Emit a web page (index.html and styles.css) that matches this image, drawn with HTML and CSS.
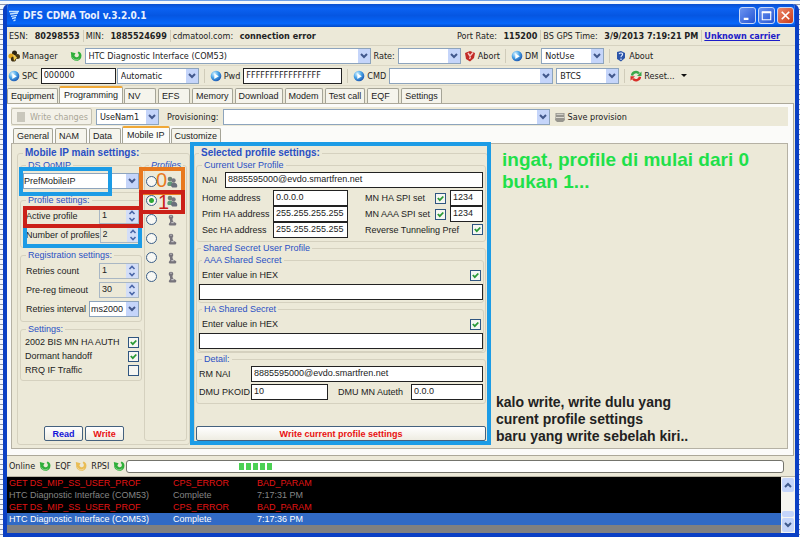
FILE: index.html
```html
<!DOCTYPE html>
<html lang="en">
<head>
<meta charset="UTF-8">
<meta name="viewport" content="width=device-width, initial-scale=1.0">
<title>DFS CDMA Tool v.3.2.0.1</title>
<link rel="stylesheet" href="styles.css">
</head>
<body>
<!-- shared icons -->
<svg class="sprite" aria-hidden="true">
	<defs>
		<radialGradient id="ball" cx="35%" cy="30%" r="75%">
			<stop offset="0" stop-color="#d9f3ff"/>
			<stop offset="0.5" stop-color="#4aa5e8"/>
			<stop offset="1" stop-color="#1b55b0"/>
		</radialGradient>
	</defs>
	<symbol id="i-play" viewBox="0 0 12 12">
		<circle cx="6" cy="6" r="5.3" fill="url(#ball)"/>
		<path d="M4.300 3.500v5.500l4.500-2.700z" fill="#fff"/>
	</symbol>
	<symbol id="i-refresh" viewBox="0 0 12 12">
		<path d="M.8 2L5.600 3.200 4.400 5.200C5 7.500 7.500 8 8.600 6.200 9.200 5 8.800 3.600 7.600 3L8.600 1.600C11 2.400 12 5 11.200 7.500 10 10.800 5.800 12 3 9.600 1.600 8.400 1 7 1.200 5.200z" fill="currentColor"/>
		<path d="M2.500 7.500c1.200 2.400 4.500 3 6.700 1" fill="none" stroke="#fff" stroke-opacity=".4" stroke-width="1"/>
	</symbol>
	<symbol id="i-user" viewBox="0 0 12 12">
		<circle cx="5" cy="3" r="2.300" fill="#77747c"/>
		<path d="M3.800 5h2.600l.6 2.500 3 1.500c.6.600.4 2-.6 2.400H4C2.700 11.400 2.500 10 3.200 9.200L4.200 8z" fill="#77747c"/>
		<path d="M4.300 2.200h1.400M5.300 8.700h2.500" stroke="#d5d2d6" stroke-width="1"/>
	</symbol>
	<symbol id="i-users" viewBox="0 0 12 12">
		<circle cx="4" cy="3" r="2.300" fill="#6d8276"/>
		<path d="M2 6.200c1-1.200 3.500-1 4.300.3L7 10H2.400C1 9.500 1 7.500 2 6.200z" fill="#5f9a78"/>
		<circle cx="7.500" cy="4.500" r="2.200" fill="#75757f"/>
		<path d="M5.500 7.500c1.500-1.200 4-1 5.200.5.8 1 .8 3-.2 3.600H6.300C5 10.800 4.700 8.700 5.500 7.500z" fill="#6b6f7c"/>
	</symbol>
</svg>

<div class="window">
	<header class="title-bar">
		<svg class="title-logo" viewBox="0 0 12 12"><path d="M1 1.500h10M2 4l8-1M3 6.300l6-1M4 8.500l4-1M5.500 10.800l2-1" stroke="#c4e2ff" stroke-width="1.300" fill="none"/></svg>
		<h1>DFS CDMA Tool v.3.2.0.1</h1>
		<div class="title-buttons">
			<button type="button" aria-label="Minimize"><svg viewBox="0 0 16 16"><path d="M4 11.500h5" stroke="#fff" stroke-width="2.400"/></svg></button>
			<button type="button" aria-label="Maximize"><svg viewBox="0 0 16 16"><path d="M3.500 4.500h9v8h-9z" fill="none" stroke="#fff" stroke-width="1.200"/><path d="M3 4.500h10" stroke="#fff" stroke-width="2.200"/></svg></button>
			<button type="button" class="close" aria-label="Close"><svg viewBox="0 0 16 16"><path d="M4 4l8 8M12 4l-8 8" stroke="#fff" stroke-width="1.800"/></svg></button>
		</div>
	</header>

	<div class="info-bar">
		<span class="info">ESN: <b>80298553</b></span>
		<span class="info">MIN: <b>1885524699</b></span>
		<span class="info">cdmatool.com: <b>connection error</b></span>
		<span class="info push">Port Rate: <b>115200</b></span>
		<span class="info">BS GPS Time: <b>3/9/2013 7:19:21 PM</b></span>
		<a class="info" href="#">Unknown carrier</a>
	</div>

	<div class="toolbar">
		<button type="button" class="tool manager">
			<svg class="icon" viewBox="0 0 12 12"><circle cx="6.500" cy="3" r="2.500" fill="#2c2413"/><circle cx="3" cy="6" r="2.600" fill="#e2a51c"/><circle cx="9.500" cy="6.500" r="2.500" fill="#4a3a16"/><circle cx="5.500" cy="9" r="2.600" fill="#3a2c10"/><path d="M5 4l4 3.500-3 3.500z" fill="#f3cd4d"/></svg>
			Manager
		</button>
		<button type="button" class="tool" aria-label="Refresh ports"><svg class="icon green"><use href="#i-refresh"/></svg></button>
		<select class="port" aria-label="Port"><option>HTC Diagnostic Interface (COM53)</option></select>
		<label for="rate">Rate:</label>
		<select id="rate" class="short"><option></option></select>
		<button type="button" class="tool">
			<svg class="icon" viewBox="0 0 12 12"><path d="M1 3l5-2 5 2-1 5-4 3.500L2 9z" fill="#c22a26"/><path d="M4 3l2 3 3-3.500M5.500 9l1-2" stroke="#f6c9c4" stroke-width="1.400" fill="none"/></svg>
			Abort
		</button>
		<i class="sep"></i>
		<button type="button" class="tool"><svg class="icon"><use href="#i-play"/></svg>DM</button>
		<select class="short" aria-label="DM mode"><option>NotUse</option></select>
		<i class="sep"></i>
		<button type="button" class="tool">
			<svg class="icon" viewBox="0 0 12 12"><path d="M2 2l4-1 4 2v5l-4 3.500L2 9z" fill="#2b54a8"/><path d="M4 4c1-1.500 4-1.300 3.500.6C7.300 5.700 6 5.600 6 7.200M6 8.500V10" stroke="#dfe9ff" stroke-width="1.200" fill="none"/></svg>
			About
		</button>
	</div>

	<div class="toolbar">
		<button type="button" class="tool"><svg class="icon"><use href="#i-play"/></svg>SPC</button>
		<input type="text" class="spc" aria-label="SPC" value="000000">
		<select class="spc-mode" aria-label="SPC mode"><option>Automatic</option></select>
		<i class="sep"></i>
		<button type="button" class="tool"><svg class="icon"><use href="#i-play"/></svg>Pwd</button>
		<input type="text" class="pwd" aria-label="Password" value="FFFFFFFFFFFFFFFF">
		<i class="sep"></i>
		<button type="button" class="tool"><svg class="icon"><use href="#i-play"/></svg>CMD</button>
		<select class="cmd" aria-label="Command"><option></option></select>
		<select class="short" aria-label="Command type"><option>BTCS</option></select>
		<i class="sep"></i>
		<button type="button" class="tool">
			<svg class="icon" viewBox="0 0 12 12"><path d="M2 5.500a4 4 0 0 1 7-2" fill="none" stroke="#3aa84a" stroke-width="2.400"/><path d="M11.500 1.500v4.500H7z" fill="#3aa84a"/><path d="M10 6.800a4 4 0 0 1-7 2" fill="none" stroke="#d8302a" stroke-width="2.400"/><path d="M.5 10.800V6.300H5z" fill="#d8302a"/></svg>
			Reset... <span class="drop"></span>
		</button>
	</div>

	<nav class="tabs" role="tablist">
		<button type="button" role="tab">Equipment</button>
		<button type="button" role="tab" class="active" aria-selected="true">Programming</button>
		<button type="button" role="tab">NV</button>
		<button type="button" role="tab">EFS</button>
		<button type="button" role="tab">Memory</button>
		<button type="button" role="tab">Download</button>
		<button type="button" role="tab">Modem</button>
		<button type="button" role="tab">Test call</button>
		<button type="button" role="tab">EQF</button>
		<button type="button" role="tab">Settings</button>
	</nav>

	<main class="workspace">
		<div class="sub-toolbar">
			<button type="button" class="write-changes" disabled>
				<svg class="icon" viewBox="0 0 12 12"><path d="M2 1h8v10H2z" fill="#c9c7bc"/></svg>
				Write changes
			</button>
			<select class="short" aria-label="NAM"><option>UseNam1</option></select>
			<label for="provisioning">Provisioning:</label>
			<select id="provisioning" class="provisioning"><option></option></select>
			<button type="button" class="tool">
				<svg class="icon" viewBox="0 0 12 12"><path d="M1.500 2h9v4l.5 3-2 2H3L1 9l.5-3z" fill="#96958f"/><path d="M2.500 3.300h7M2 6.500h8" stroke="#dddbd3" stroke-width="1"/></svg>
				Save provision
			</button>
		</div>

		<nav class="tabs sub" role="tablist">
			<button type="button" role="tab">General</button>
			<button type="button" role="tab">NAM</button>
			<button type="button" role="tab">Data</button>
			<button type="button" role="tab" class="active" aria-selected="true">Mobile IP</button>
			<button type="button" role="tab">Customize</button>
		</nav>

		<div class="page">
			<section class="main-settings">
				<fieldset class="main-body">
					<legend class="big">Mobile IP main settings:</legend>
					<div class="main-columns">
						<div class="settings-column">
							<fieldset>
								<legend>DS QoMIP</legend>
								<select class="wide" aria-label="DS QoMIP"><option>PrefMobileIP</option></select>
							</fieldset>
							<fieldset>
								<legend>Profile settings:</legend>
								<div class="row"><label for="active">Active profile</label><input type="number" id="active" class="spin" value="1"></div>
								<div class="row"><label for="count">Number of profiles</label><input type="number" id="count" class="spin" value="2"></div>
							</fieldset>
							<fieldset>
								<legend>Registration settings:</legend>
								<div class="row"><label for="retries">Retries count</label><input type="number" id="retries" class="spin" value="1"></div>
								<div class="row"><label for="prereg">Pre-reg timeout</label><input type="number" id="prereg" class="spin" value="30"></div>
								<div class="row"><label for="interval">Retries interval</label><select id="interval" class="interval"><option>ms2000</option></select></div>
							</fieldset>
							<fieldset>
								<legend>Settings:</legend>
								<label class="row check">2002 BIS MN HA AUTH<input type="checkbox" checked></label>
								<label class="row check">Dormant handoff<input type="checkbox" checked></label>
								<label class="row check">RRQ IF Traffic<input type="checkbox"></label>
							</fieldset>
							<div class="buttons">
								<button type="button" class="push-button read">Read</button>
								<button type="button" class="push-button write">Write</button>
							</div>
						</div>
						<fieldset class="profiles">
							<legend>Profiles</legend>
							<label><input type="radio" name="profile" aria-label="Profile 0"><svg class="icon"><use href="#i-users"/></svg></label>
							<label><input type="radio" name="profile" aria-label="Profile 1" checked><svg class="icon"><use href="#i-users"/></svg></label>
							<label><input type="radio" name="profile" aria-label="Profile 2"><svg class="icon"><use href="#i-user"/></svg></label>
							<label><input type="radio" name="profile" aria-label="Profile 3"><svg class="icon"><use href="#i-user"/></svg></label>
							<label><input type="radio" name="profile" aria-label="Profile 4"><svg class="icon"><use href="#i-user"/></svg></label>
							<label><input type="radio" name="profile" aria-label="Profile 5"><svg class="icon"><use href="#i-user"/></svg></label>
						</fieldset>
					</div>
				</fieldset>
				<!-- marker boxes drawn over the form -->
				<svg class="marks" viewBox="0 0 176 110" fill="none" stroke-width="4">
					<path d="M8 80V99H123V80" stroke="#1c9ce6"/>
					<path d="M4 22H93V47H4z" stroke="#1c9ce6"/>
					<path d="M124 22H166V46H124z" stroke="#e8791e"/>
					<path d="M124 45H166V65H124V79H8V61H124z" stroke="#cb2018"/>
					<text x="139" y="40" class="mark-zero">0</text>
					<text x="141" y="62" class="mark-one">1</text>
				</svg>
			</section>

			<section class="selected-profile">
				<fieldset class="selected-body">
					<legend class="big">Selected profile settings:</legend>
					<fieldset>
						<legend>Current User Profile</legend>
						<div class="row nai"><label for="nai">NAI</label><input type="text" id="nai" value="8885595000@evdo.smartfren.net"></div>
						<div class="addresses">
							<label for="home">Home address</label><input type="text" id="home" value="0.0.0.0">
							<label for="spi1" class="spi">MN HA SPI set</label><input type="checkbox" id="spi1" checked><input type="text" aria-label="MN HA SPI" value="1234">
							<label for="prim">Prim HA address</label><input type="text" id="prim" value="255.255.255.255">
							<label for="spi2" class="spi">MN AAA SPI set</label><input type="checkbox" id="spi2" checked><input type="text" aria-label="MN AAA SPI" value="1234">
							<label for="sec">Sec HA address</label><input type="text" id="sec" value="255.255.255.255">
							<label class="spi tunnel">Reverse Tunneling Pref<input type="checkbox" checked></label>
						</div>
					</fieldset>
					<fieldset class="shared">
						<legend>Shared Secret User Profile</legend>
						<fieldset>
							<legend>AAA Shared Secret</legend>
							<label class="row hex">Enter value in HEX<input type="checkbox" checked></label>
							<input type="text" aria-label="AAA Shared Secret" autofocus>
						</fieldset>
						<fieldset>
							<legend>HA Shared Secret</legend>
							<label class="row hex">Enter value in HEX<input type="checkbox" checked></label>
							<input type="text" aria-label="HA Shared Secret">
						</fieldset>
					</fieldset>
					<fieldset>
						<legend>Detail:</legend>
						<div class="detail-grid">
							<label for="rmnai">RM NAI</label><input type="text" id="rmnai" class="span" value="8885595000@evdo.smartfren.net">
							<label for="pkoid">DMU PKOID</label><input type="text" id="pkoid" value="10">
							<label for="auteth" class="auteth">DMU MN Auteth</label><input type="text" id="auteth" value="0.0.0">
						</div>
					</fieldset>
					<button type="button" class="push-button write write-profile">Write current profile settings</button>
				</fieldset>
			</section>

			<aside class="notes">
				<p class="note-top">ingat, profile di mulai dari 0<br>bukan 1...</p>
				<p class="note-bottom">kalo write, write dulu yang<br>curent profile settings<br>baru yang write sebelah kiri..</p>
			</aside>
		</div>
	</main>

	<div class="status-bar">
		<span>Online</span><svg class="icon green"><use href="#i-refresh"/></svg>
		<span>EQF</span><svg class="icon yellow"><use href="#i-refresh"/></svg>
		<span>RPSI</span><svg class="icon green"><use href="#i-refresh"/></svg>
		<div class="progress" role="progressbar" aria-label="Activity"><i></i><i></i><i></i><i></i><i></i></div>
	</div>

	<div class="log">
		<div class="log-body">
			<table>
				<tr class="error"><td>GET DS_MIP_SS_USER_PROF</td><td>CPS_ERROR</td><td>BAD_PARAM</td></tr>
				<tr><td>HTC Diagnostic Interface (COM53)</td><td>Complete</td><td>7:17:31 PM</td></tr>
				<tr class="error"><td>GET DS_MIP_SS_USER_PROF</td><td>CPS_ERROR</td><td>BAD_PARAM</td></tr>
				<tr class="selected"><td>HTC Diagnostic Interface (COM53)</td><td>Complete</td><td>7:17:36 PM</td></tr>
			</table>
		</div>
		<div class="scrollbar">
			<button type="button" aria-label="Scroll up"><svg viewBox="0 0 12 12"><path d="M3 8l3-3 3 3" fill="none" stroke="#3f5a8c" stroke-width="2"/></svg></button>
			<div class="thumb"></div>
			<button type="button" aria-label="Scroll down"><svg viewBox="0 0 12 12"><path d="M3 4l3 3 3-3" fill="none" stroke="#3f5a8c" stroke-width="2"/></svg></button>
		</div>
	</div>
</div>
</body>
</html>
```

FILE: styles.css
```css
* {
	box-sizing: border-box;
}
body {
	margin: 0;
	padding: 3px 1px 0 3px;
	min-height: 100vh;
	display: flex;
	background: repeating-linear-gradient(#f4f7fc 0 4px, #8a93ac 4px 5px);
	border-top: 1px solid #6f9fe6;
	font-family: "Liberation Sans", Arial, sans-serif;
	font-size: 9px;
	line-height: 12px;
	color: #222;
}
button, input, select {
	font: inherit;
	color: inherit;
	margin: 0;
}
button {
	padding: 0;
	border: none;
	background: none;
	white-space: nowrap;
}
h1, p {
	margin: 0;
}
.sprite {
	position: absolute;
	width: 0;
	height: 0;
}
.icon {
	width: 12px;
	height: 12px;
	flex: none;
}
.green {
	color: #2faf3a;
}
.yellow {
	color: #e9bd55;
}

/* window */
.window {
	flex: 1;
	min-width: 0;
	display: flex;
	flex-direction: column;
	border: 4px solid #0a3fc4;
	border-top: none;
	border-radius: 6px 6px 0 0;
	background: #ece9d8;
	overflow: hidden;
}
.title-bar {
	display: flex;
	align-items: center;
	height: 23px;
	margin: 0 -4px;
	padding: 0 5px;
	background: linear-gradient(#0a4fd0, #0b62f2 20%, #0556e2 50%, #0566fa 85%, #0348c4);
	color: #e8f1ff;
}
.title-logo {
	width: 12px;
	height: 12px;
	margin-right: 3px;
}
.title-bar h1 {
	font: bold 10px/14px "DejaVu Sans Condensed", "DejaVu Sans", sans-serif;
}
.title-buttons {
	display: flex;
	gap: 2px;
	margin-left: auto;
}
.title-buttons button {
	width: 17px;
	height: 17px;
	border: 1px solid #c7d8f8;
	border-radius: 3px;
	background: linear-gradient(135deg, #6d95f0, #2454d4);
}
.title-buttons .close {
	background: linear-gradient(135deg, #ee8a6c, #c93a18);
}
.title-buttons svg {
	display: block;
	width: 15px;
	height: 15px;
}

/* bars */
.info-bar, .toolbar, .sub-toolbar, .status-bar {
	display: flex;
	align-items: center;
	font-family: "DejaVu Sans Condensed", "DejaVu Sans", sans-serif;
	white-space: nowrap;
}
.info-bar {
	height: 19px;
	padding-right: 12px;
	border-bottom: 1px solid #d6d2c0;
}
.info {
	padding: 0 3px 0 2px;
	border-left: 1px solid #d0ccba;
}
.info:first-child, .push {
	border-left: none;
}
.info b {
	padding-left: 4px;
}
.push {
	margin-left: auto;
}
a.info {
	font-weight: bold;
	color: #1c1cc8;
}
.toolbar {
	height: 20px;
	gap: 3px;
	padding-left: 1px;
	border-bottom: 1px solid #dcd8c6;
}
.tool {
	display: flex;
	align-items: center;
	gap: 2px;
}
.manager {
	margin-right: 9px;
}
.sep {
	width: 1px;
	height: 14px;
	margin: 0 2px;
	background: #d0ccba;
}
.drop {
	margin-left: 4px;
	border: 3px solid transparent;
	border-top-color: #111;
	border-bottom: none;
}

/* form controls */
select {
	appearance: none;
	height: 16px;
	min-width: 0;
	padding: 0 14px 0 3px;
	border: 1px solid #8da4bd;
	border-radius: 0;
	background: #fff url("data:image/svg+xml,%3Csvg xmlns='http://www.w3.org/2000/svg' width='12' height='14' viewBox='0 0 12 14'%3E%3Cpath d='M0 0h12v14H0z' fill='%23c5d5fa'/%3E%3Cpath d='M3 5l3 3 3-3' fill='none' stroke='%2342588c' stroke-width='2'/%3E%3C/svg%3E") no-repeat right center;
}
.port {
	flex: 0 1 286px;
}
.short {
	flex: 0 1 63px;
}
.spc-mode {
	flex: 0 1 82px;
	margin-left: -2px;
}
.cmd {
	flex: 0 1 164px;
}
input[type="text"] {
	display: block;
	min-width: 0;
	width: 100%;
	height: 16px;
	padding: 0 2px 2px;
	border: 1px solid #222;
	background: #fff;
	outline: none;
}
.toolbar .spc {
	flex: 0 1 75px;
}
.toolbar .pwd {
	flex: 0 1 99px;
}
.spin {
	width: 40px;
	height: 16px;
	padding: 0 14px 1px 2px;
	border: 1px solid #a9b7c4;
	background: #ece9d8 url("data:image/svg+xml,%3Csvg xmlns='http://www.w3.org/2000/svg' width='12' height='14' viewBox='0 0 12 14'%3E%3Cpath d='M0 0h12v14H0z' fill='%23d3def8'/%3E%3Cpath d='M3.500 5L6 2.500 8.500 5M3.500 9L6 11.500 8.500 9' fill='none' stroke='%234a66a8' stroke-width='1.600'/%3E%3C/svg%3E") no-repeat right center;
	appearance: textfield;
}
.spin::-webkit-inner-spin-button {
	display: none;
}
input[type="checkbox"] {
	appearance: none;
	width: 11px;
	height: 11px;
	flex: none;
	border: 1px solid #2f5580;
	background: #f6f6f2;
}
input[type="checkbox"]:checked {
	background: #f6f6f2 url("data:image/svg+xml,%3Csvg xmlns='http://www.w3.org/2000/svg' viewBox='0 0 9 9'%3E%3Cpath d='M1.800 4l2 2.200L7.300 2.500' fill='none' stroke='%232b9a36' stroke-width='1.800'/%3E%3C/svg%3E");
}
input[type="radio"] {
	appearance: none;
	width: 11px;
	height: 11px;
	flex: none;
	border: 1px solid #3c5f88;
	border-radius: 50%;
	background: #f8f8f4;
}
input[type="radio"]:checked {
	background: radial-gradient(#2fa836 0 2px, #f8f8f4 3px);
}
.push-button {
	height: 15px;
	border: 1px solid #44617e;
	border-radius: 2px;
	background: linear-gradient(#fff, #eeece2);
	font-weight: bold;
}
.read {
	color: #1414d8;
}
.write {
	color: #e81010;
}

/* tabs */
.tabs {
	display: flex;
	align-items: flex-end;
	gap: 2px;
	height: 17px;
	white-space: nowrap;
}
.tabs button {
	min-width: 32px;
	height: 15px;
	padding: 0 3px;
	border: 1px solid #a5a497;
	border-bottom: none;
	border-radius: 2px 2px 0 0;
	background: #f5f4ec;
	text-align: left;
}
.tabs .active {
	height: 17px;
	margin: 0 -1px;
	padding: 0 4px 2px;
	border-top: 2px solid #f0a836;
	background: #fcfcf9;
}
.tabs.sub {
	padding-left: 2px;
}

/* programming page */
.workspace {
	flex: 1;
	display: flex;
	flex-direction: column;
	margin-right: 1px;
	padding: 3px 5px 6px 4px;
	border: 1px solid #aca899;
	border-left: none;
	background: #fbfbf9;
}
.sub-toolbar {
	height: 19px;
	background: #ece9d8;
}
.sub-toolbar .short {
	margin: 0 8px 0 4px;
}
.write-changes {
	display: flex;
	align-items: center;
	gap: 3px;
	height: 17px;
	padding: 0 3px;
	border: 1px solid #c4c1b2;
	border-radius: 2px;
	background: #f3f1e8;
	color: #a9a697;
}
.provisioning {
	flex: 0 1 327px;
	margin: 0 4px;
}
.page {
	flex: 1;
	display: flex;
	padding: 3px 0 3px 5px;
	border: 1px solid #b5b1a4;
	background: #ece9d8;
}
fieldset {
	min-width: 0;
	margin: 0;
	padding: 0 2px 3px;
	border: 1px solid #d5d1bf;
	border-radius: 3px;
}
legend {
	margin-left: 3px;
	padding: 0 2px;
	color: #2a50c4;
}
.big {
	font-size: 10px;
	font-weight: bold;
}
.row {
	display: flex;
	align-items: center;
	justify-content: space-between;
	height: 19px;
	padding-left: 3px;
	white-space: nowrap;
}
.main-settings {
	position: relative;
	display: flex;
	flex: none;
	width: 173px;
}
.main-body {
	flex: 1;
}
.main-columns {
	display: flex;
	gap: 2px;
	height: 100%;
}
.settings-column {
	display: flex;
	flex-direction: column;
	width: 122px;
	gap: 1px;
}
.wide {
	width: 100%;
	margin-top: 2px;
	padding-left: 0;
}
.interval {
	width: 50px;
	padding-left: 1px;
}
.check {
	height: 14px;
	padding-left: 2px;
}
.buttons {
	display: flex;
	justify-content: flex-end;
	gap: 2px;
	margin-top: auto;
	padding-right: 18px;
}
.buttons button {
	width: 39px;
}
.profiles {
	flex: 1;
	padding: 0;
}
.profiles legend {
	margin: 0 0 1px 4px;
	font-style: italic;
}
.profiles label {
	display: flex;
	align-items: center;
	gap: 9px;
	height: 19px;
	padding-left: 1px;
}
.marks {
	position: absolute;
	top: 0;
	left: 0;
	width: 176px;
	height: 110px;
	pointer-events: none;
}
.mark-zero, .mark-one {
	font-size: 20px;
	stroke: none;
	fill: #e8791e;
}
.mark-one {
	fill: #cb2018;
}

/* selected profile, framed by the blue marker */
.selected-profile {
	position: relative;
	display: flex;
	flex: none;
	width: 301px;
	padding: 0 3px 0 4px;
}
.selected-profile::after {
	content: "";
	position: absolute;
	inset: -5px 0 0;
	border: 4px solid #1c9ce6;
	pointer-events: none;
}
.selected-body {
	display: flex;
	flex-direction: column;
	flex: 1;
	padding: 0 1px 3px;
}
.nai {
	height: 17px;
	gap: 8px;
}
.addresses {
	display: grid;
	grid-template-columns: 71px 75px 1fr 15px 33px;
	align-items: center;
	margin-top: 2px;
	padding-left: 3px;
	white-space: nowrap;
}
.spi {
	padding-left: 17px;
}
.tunnel {
	grid-column: 3 / 6;
	display: flex;
	justify-content: space-between;
}
.shared {
	padding: 0 1px;
}
.shared fieldset {
	padding: 0 0 2px;
}
.hex {
	height: 18px;
	padding-right: 2px;
}
.detail-grid {
	display: grid;
	grid-template-columns: 52px 77px 1fr 72px;
	row-gap: 2px;
	align-items: center;
	padding-top: 1px;
	white-space: nowrap;
}
.span {
	grid-column: 2 / 5;
}
.auteth {
	padding-left: 10px;
}
.write-profile {
	margin-top: auto;
}

/* notes on the free area */
.notes {
	flex: 1;
	display: flex;
	flex-direction: column;
	justify-content: space-between;
	padding: 2px 0 0 5px;
	white-space: nowrap;
	font-weight: bold;
}
.note-top {
	padding-left: 6px;
	font-size: 19px;
	line-height: 22px;
	color: #1fe04a;
}
.note-bottom {
	font-size: 14px;
	line-height: 17px;
	color: #222;
}

/* status and log */
.status-bar {
	height: 21px;
	gap: 4px;
	padding: 0 11px 0 2px;
	border-bottom: 1px solid #b8b4a4;
}
.progress {
	flex: 1;
	display: flex;
	align-items: center;
	gap: 2px;
	height: 13px;
	margin-left: -3px;
	padding-left: 112px;
	border: 1px solid #74746c;
	border-radius: 3px;
	background: #fff;
}
.progress i {
	width: 5px;
	height: 7px;
	background: #4bd154;
}
.log {
	display: flex;
	height: 56px;
	background: #808080;
}
.log-body {
	flex: 1;
}
.log table {
	width: 100%;
	table-layout: fixed;
	border-collapse: collapse;
	background: #000;
	color: #858585;
}
.log td {
	height: 12px;
	padding: 0 2px;
}
.log td:nth-child(1) {
	width: 164px;
}
.log td:nth-child(2) {
	width: 84px;
}
.log .error {
	color: #e01414;
}
.log .selected {
	background: #316ac5;
	color: #fff;
}
.scrollbar {
	display: flex;
	flex-direction: column;
	width: 14px;
	padding: 1px;
	background: #f6f5f0;
}
.scrollbar button, .thumb {
	height: 14px;
	border-radius: 2px;
	background: #c5d5fa;
}
.scrollbar svg {
	display: block;
	width: 12px;
	height: 12px;
}
.thumb {
	height: 6px;
	margin: auto 0 1px;
}
```
